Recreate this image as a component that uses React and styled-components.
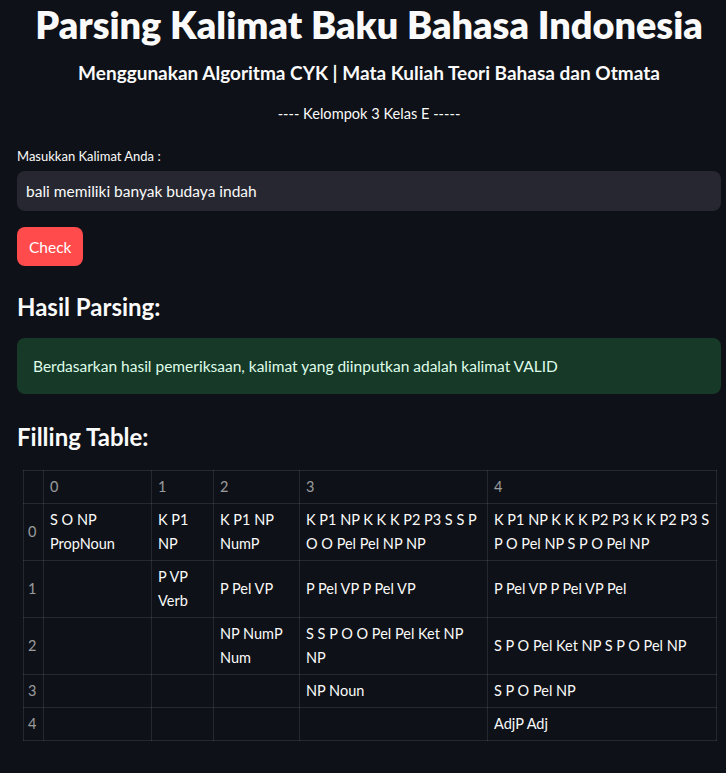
import styled, { createGlobalStyle } from "styled-components"

const GlobalStyle = createGlobalStyle`
  html, body {
    margin: 0;
    padding: 0;
    background: #0e1117;
    color: #fafafa;
    font-family: Lato, "Noto Sans", sans-serif;
  }
`

const Page = styled.div`
  min-height: 773px;
  background: #0e1117;
  padding: 0 5px 0 17px;
  box-sizing: border-box;
`

const Title = styled.h1`
  margin: 0;
  padding-top: 2px;
  text-align: center;
  font-size: 37.8px;
  font-weight: 800;
  line-height: 46px;
`

const SubTitle = styled.h3`
  margin: 12px 0 0;
  text-align: center;
  font-size: 19px;
  font-weight: 700;
  line-height: 26px;
`

const Group = styled.p`
  margin: 17px 0 0;
  text-align: center;
  font-size: 14.6px;
  line-height: 22px;
`

const Label = styled.label`
  display: block;
  margin-top: 21px;
  font-size: 13px;
  line-height: 20px;
`

const Input = styled.div`
  margin-top: 5px;
  height: 40px;
  display: flex;
  align-items: center;
  padding: 0 9px;
  background: #262730;
  border-radius: 8px;
  font-size: 15.5px;
`

const Button = styled.button`
  margin-top: 16px;
  height: 39px;
  padding: 0 12px;
  background: #ff4b4b;
  color: #fff;
  border: none;
  border-radius: 8px;
  font-family: inherit;
  font-size: 15.5px;
`

const Heading = styled.h2`
  margin: ${p => p.top}px 0 0;
  font-size: 24px;
  font-weight: 700;
  line-height: 34px;
`

const Success = styled.div`
  margin-top: 14px;
  height: 56px;
  display: flex;
  align-items: center;
  padding: 0 16px;
  box-sizing: border-box;
  background: #173928;
  color: #dffde9;
  border-radius: 8px;
  font-size: 15.5px;
`

const Table = styled.table`
  margin: 16px 0 0 6px;
  width: 693px;
  border-collapse: collapse;
  table-layout: fixed;
  font-size: 14.5px;
  line-height: 24px;
`

const Cell = styled.td`
  border: 1px solid rgba(250, 250, 250, 0.1);
  padding: 4px 6px;
  vertical-align: middle;
  color: ${p => (p.head ? "rgba(250, 250, 250, 0.6)" : "#fafafa")};
  padding-left: ${p => (p.index ? "4px" : "6px")};
`

const widths = [20, 108, 62, 86, 188, 229]

const rows = [
  ["S O NP PropNoun", "K P1 NP", "K P1 NP NumP", "K P1 NP K K K P2 P3 S S P O O Pel Pel NP NP", "K P1 NP K K K P2 P3 K K P2 P3 S P O Pel NP S P O Pel NP"],
  ["", "P VP Verb", "P Pel VP", "P Pel VP P Pel VP", "P Pel VP P Pel VP Pel"],
  ["", "", "NP NumP Num", "S S P O O Pel Pel Ket NP NP", "S P O Pel Ket NP S P O Pel NP"],
  ["", "", "", "NP Noun", "S P O Pel NP"],
  ["", "", "", "", "AdjP Adj"],
]

const App = () => {
  return (
    <>
      <GlobalStyle />
      <Page>
        <Title>Parsing Kalimat Baku Bahasa Indonesia</Title>
        <SubTitle>Menggunakan Algoritma CYK | Mata Kuliah Teori Bahasa dan Otmata</SubTitle>
        <Group>---- Kelompok 3 Kelas E -----</Group>
        <Label>Masukkan Kalimat Anda :</Label>
        <Input>bali memiliki banyak budaya indah</Input>
        <Button>Check</Button>
        <Heading top={24}>Hasil Parsing:</Heading>
        <Success>Berdasarkan hasil pemeriksaan, kalimat yang diinputkan adalah kalimat VALID</Success>
        <Heading top={26}>Filling Table:</Heading>
        <Table>
          <colgroup>
            {widths.map((w, i) => (
              <col key={i} style={{ width: w }} />
            ))}
          </colgroup>
          <thead>
            <tr>
              <Cell head index></Cell>
              {[0, 1, 2, 3, 4].map(n => (
                <Cell head key={n}>{n}</Cell>
              ))}
            </tr>
          </thead>
          <tbody>
            {rows.map((row, rIdx) => (
              <tr key={rIdx}>
                <Cell head index>{rIdx}</Cell>
                {row.map((val, cIdx) => (
                  <Cell key={cIdx}>{val}</Cell>
                ))}
              </tr>
            ))}
          </tbody>
        </Table>
      </Page>
    </>
  )
}

export default App
